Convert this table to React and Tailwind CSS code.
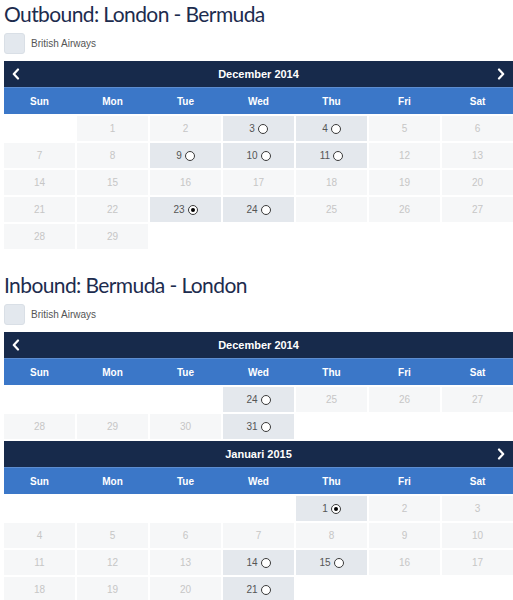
import React from 'react';

const WEEKDAYS = ['Sun', 'Mon', 'Tue', 'Wed', 'Thu', 'Fri', 'Sat'];

// cell: null = empty, [n] = disabled, [n, 'a'] = available, [n, 's'] = selected
const outboundDec = [
  [null, [1], [2], [3, 'a'], [4, 'a'], [5], [6]],
  [[7], [8], [9, 'a'], [10, 'a'], [11, 'a'], [12], [13]],
  [[14], [15], [16], [17], [18], [19], [20]],
  [[21], [22], [23, 's'], [24, 'a'], [25], [26], [27]],
  [[28], [29], null, null, null, null, null],
];

const inboundDec = [
  [null, null, null, [24, 'a'], [25], [26], [27]],
  [[28], [29], [30], [31, 'a'], null, null, null],
];

const inboundJan = [
  [null, null, null, null, [1, 's'], [2], [3]],
  [[4], [5], [6], [7], [8], [9], [10]],
  [[11], [12], [13], [14, 'a'], [15, 'a'], [16], [17]],
  [[18], [19], [20], [21, 'a'], null, null, null],
];

const Chevron = ({ dir }) => (
  <svg width="8" height="12" viewBox="0 0 8 12" fill="none">
    <polyline
      points={dir === 'left' ? '6,1.5 1.8,6 6,10.5' : '2,1.5 6.2,6 2,10.5'}
      stroke="white"
      strokeWidth="2.2"
      strokeLinecap="round"
      strokeLinejoin="round"
    />
  </svg>
);

const Radio = ({ checked }) => (
  <span className="inline-flex items-center justify-center w-[10px] h-[10px] rounded-full border border-[#3a3a3a] bg-white ml-[3px]">
    {checked && <span className="w-[4px] h-[4px] rounded-full bg-black" />}
  </span>
);

const DayCell = ({ cell }) => {
  if (!cell) return <div className="h-[25px]" />;
  const [n, kind] = cell;
  if (!kind) {
    return (
      <div className="h-[25px] bg-[#f6f7f8] flex items-center justify-center text-[10px] text-[#c6c6c6]">
        {n}
      </div>
    );
  }
  return (
    <div className="h-[25px] bg-[#e4e8ed] flex items-center justify-center text-[10px] text-[#555]">
      <span>{n}</span>
      <Radio checked={kind === 's'} />
    </div>
  );
};

const Month = ({ title, rows, prev, next }) => (
  <div>
    <div className="h-[27px] bg-[#172a4b] flex items-center justify-between px-[8px] border-b border-[#5d8dd0]">
      <div className="w-[10px] flex">{prev && <Chevron dir="left" />}</div>
      <div className="text-white font-bold text-[11px]">{title}</div>
      <div className="w-[10px] flex justify-end">{next && <Chevron dir="right" />}</div>
    </div>
    <div className="h-[26px] bg-[#3b77c8] grid grid-cols-7 gap-x-[2px]">
      {WEEKDAYS.map((d) => (
        <div key={d} className="flex items-center justify-center text-white font-bold text-[10px]">
          {d}
        </div>
      ))}
    </div>
    <div className="grid grid-cols-7 gap-x-[2px] gap-y-[2px] pt-[2px] pb-[2px]">
      {rows.flat().map((c, i) => (
        <DayCell key={i} cell={c} />
      ))}
    </div>
  </div>
);

const Leg = ({ title, children }) => (
  <div>
    <h2
      className="text-[21px] leading-[28px] tracking-[-0.6px] text-[#1d2c4e] mb-[5px]"
      style={{ fontFamily: 'Lato, sans-serif' }}
    >
      {title}
    </h2>
    <div className="h-[21px] flex items-center">
      <div className="w-[21px] h-[21px] rounded-[3px] bg-[#e3e8ee] border border-[#d9dfe6]" />
      <span className="ml-[6px] text-[10px] text-[#555]">British Airways</span>
    </div>
    <div className="mt-[7px]">{children}</div>
  </div>
);

export default function App() {
  return (
    <div
      className="w-[513px] h-[600px] overflow-hidden bg-white pl-[4px]"
      style={{ fontFamily: '"Liberation Sans", Arial, sans-serif' }}
    >
      <div className="w-[509px]">
        <Leg title="Outbound: London - Bermuda">
          <Month title="December 2014" rows={outboundDec} prev next />
        </Leg>
        <div className="h-[20px]" />
        <Leg title="Inbound: Bermuda - London">
          <Month title="December 2014" rows={inboundDec} prev />
          <Month title="Januari 2015" rows={inboundJan} next />
        </Leg>
      </div>
    </div>
  );
}
